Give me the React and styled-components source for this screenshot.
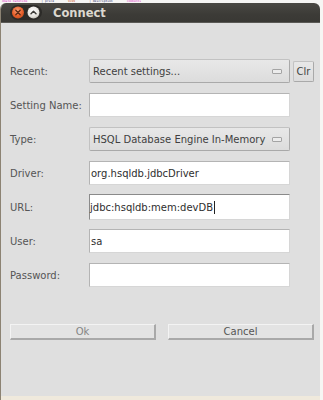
import React from "react"
import styled, { createGlobalStyle } from "styled-components"

const GlobalStyle = createGlobalStyle`
  html, body {
    margin: 0;
    padding: 0;
    background: #f6f6f4;
  }
  body {
    font-family: "DejaVu Sans", "Liberation Sans", sans-serif;
  }
`

const Page = styled.div`
  width: 323px;
  height: 400px;
  display: flex;
  flex-direction: column;
  overflow: hidden;
`

// bits of the window lying behind the dialog
const BackStrip = styled.div`
  height: 3px;
  overflow: hidden;
  display: flex;
  align-items: flex-start;
  gap: 14px;
  font-family: "DejaVu Sans Mono", monospace;
  font-size: 3px;
  line-height: 3px;
  white-space: nowrap;
  color: #2b2b6a;
  padding-left: 2px;
  span.pink { color: #e040c8; }
  span.orange { color: #d06030; }
`

const Window = styled.div`
  width: 320px;
  display: flex;
  flex-direction: column;
  border-radius: 6px 6px 0 0;
  overflow: hidden;
  border-left: 1px solid #8c8373;
  box-sizing: border-box;
`

const TitleBar = styled.div`
  height: 21px;
  display: flex;
  align-items: center;
  gap: 11px;
  padding-left: 9px;
  background: linear-gradient(#4a4944, #3c3b37 60%, #393834);
  border-bottom: 1px solid #5a5955;
`

const Title = styled.span`
  font-family: "DejaVu Sans", sans-serif;
  font-weight: bold;
  font-size: 11.5px;
  color: #dcd8cf;
  padding-top: 1px;
`

const Body = styled.div`
  height: 366px;
  background: #dfdfdf;
  padding: 36px 0 0 9px;
  display: flex;
  flex-direction: column;
  gap: 37px;
  border-bottom: 4px solid #efe9dc;
`

const Form = styled.div`
  display: grid;
  grid-template-columns: 79px 202px auto;
  grid-auto-rows: 24px;
  row-gap: 10px;
  align-items: center;
`

const Label = styled.span`
  font-size: 10px;
  color: #555555;
`

const Field = styled.div`
  height: ${p => (p.$focused ? 26 : 24)}px;
  box-sizing: border-box;
  background: #ffffff;
  border: 1px solid ${p => (p.$focused ? "#8a8a8a" : "#b4b4b4")};
  border-right-color: #d6d6d6;
  border-bottom-color: #d6d6d6;
  display: flex;
  align-items: center;
  padding-left: ${p => (p.$focused ? 0 : 1)}px;
  font-size: 10px;
  white-space: nowrap;
  color: #2e2e2e;
  width: 201px;
`

const Caret = styled.span`
  width: 1px;
  height: 13px;
  background: #222;
  margin-left: 1px;
`

const Combo = styled.div`
  height: 24px;
  width: 201px;
  box-sizing: border-box;
  background: linear-gradient(#e8e8e8, #dcdcdc);
  border: 1px solid #c2c2c2;
  border-bottom-color: #a9a9a9;
  border-right-color: #a9a9a9;
  border-radius: 2px;
  display: flex;
  align-items: center;
  justify-content: space-between;
  padding: 0 7px 0 3px;
  font-size: 10px;
  white-space: nowrap;
  color: #404040;
`

const Knob = styled.span`
  width: 8px;
  height: 3px;
  border: 1px solid #a4a4a4;
  border-radius: 1px;
  background: #ececec;
`

const SmallButton = styled.div`
  height: 21px;
  width: 21px;
  margin-left: 2px;
  box-sizing: border-box;
  background: linear-gradient(#e8e8e8, #dcdcdc);
  border: 1px solid #c2c2c2;
  border-bottom-color: #a9a9a9;
  border-right-color: #a9a9a9;
  border-radius: 2px;
  display: flex;
  align-items: center;
  justify-content: center;
  font-size: 10px;
  color: #444;
`

const Buttons = styled.div`
  display: grid;
  grid-template-columns: 146px 146px;
  column-gap: 12px;
`

const Button = styled.div`
  height: 16px;
  box-sizing: border-box;
  background: #e3e3e3;
  border-top: 1px solid #f3f3f3;
  border-left: 1px solid #f3f3f3;
  border-right: 2px solid #a9a9a9;
  border-bottom: 2px solid #a9a9a9;
  display: flex;
  align-items: center;
  justify-content: center;
  font-size: 10px;
  color: ${p => (p.$muted ? "#858585" : "#555555")};
`

function WindowControls() {
  return (
    <svg width="32" height="15" viewBox="0 0 32 15">
      <rect x="0" y="0" width="32" height="15" rx="7.5" fill="#2c2b28" />
      <defs>
        <radialGradient id="cl" cx="0.45" cy="0.35" r="0.7">
          <stop offset="0" stopColor="#f7a07a" />
          <stop offset="0.6" stopColor="#e8612c" />
          <stop offset="1" stopColor="#c44a1c" />
        </radialGradient>
        <radialGradient id="mx" cx="0.45" cy="0.35" r="0.7">
          <stop offset="0" stopColor="#ffffff" />
          <stop offset="0.7" stopColor="#e4e2dc" />
          <stop offset="1" stopColor="#b8b5ad" />
        </radialGradient>
      </defs>
      <circle cx="8" cy="7.5" r="6" fill="url(#cl)" />
      <path d="M5.8 5.3 L10.2 9.7 M10.2 5.3 L5.8 9.7" stroke="#5a2a14" strokeWidth="1.3" strokeLinecap="round" />
      <circle cx="23.5" cy="7.5" r="6" fill="url(#mx)" />
      <path d="M21 8.8 L23.5 6.3 L26 8.8" stroke="#3c3b37" strokeWidth="1.5" fill="none" strokeLinecap="round" strokeLinejoin="round" />
    </svg>
  )
}

export default function App() {
  return (
    <Page>
      <GlobalStyle />
      <BackStrip>
        <span className="pink">ddate datetime</span>
        <span>| price</span>
        <span className="orange">9199</span>
        <span>| description</span>
        <span className="pink">comments</span>
      </BackStrip>
      <Window>
        <TitleBar>
          <WindowControls />
          <Title>Connect</Title>
        </TitleBar>
        <Body>
          <Form>
            <Label>Recent:</Label>
            <Combo>
              <span>Recent settings...</span>
              <Knob />
            </Combo>
            <SmallButton>Clr</SmallButton>

            <Label>Setting Name:</Label>
            <Field />
            <span />

            <Label>Type:</Label>
            <Combo>
              <span>HSQL Database Engine In-Memory</span>
              <Knob />
            </Combo>
            <span />

            <Label>Driver:</Label>
            <Field>org.hsqldb.jdbcDriver</Field>
            <span />

            <Label>URL:</Label>
            <Field $focused>
              jdbc:hsqldb:mem:devDB
              <Caret />
            </Field>
            <span />

            <Label>User:</Label>
            <Field>sa</Field>
            <span />

            <Label>Password:</Label>
            <Field />
            <span />
          </Form>
          <Buttons>
            <Button $muted>Ok</Button>
            <Button>Cancel</Button>
          </Buttons>
        </Body>
      </Window>
    </Page>
  )
}
